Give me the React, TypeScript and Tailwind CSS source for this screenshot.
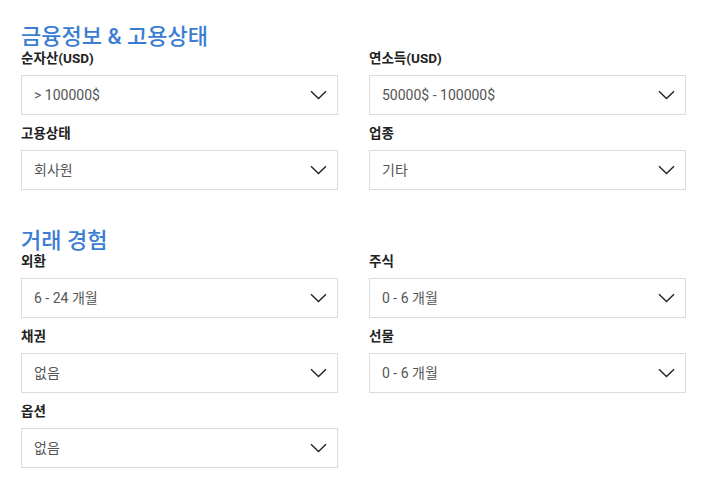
import React from "react";

const Chevron = () => (
  <svg width="17" height="10" viewBox="0 0 17 10" fill="none" className="shrink-0">
    <path d="M1 1.2 L8.5 8.5 L16 1.2" stroke="#222" strokeWidth="1.4" strokeLinejoin="miter" />
  </svg>
);

const Field = ({ label, value }: { label: string; value?: string }) => (
  <div className="flex flex-col">
    <div className="text-[13.5px] font-bold text-[#222] leading-[16px] h-[16px]">{label}</div>
    <div className="mt-[9px] h-[40px] border border-[#dcdcdc] bg-white flex items-center justify-between pl-[12px] pr-[10px]">
      <span className="text-[14px] text-[#555] leading-none">{value}</span>
      <Chevron />
    </div>
  </div>
);

export default function App() {
  return (
    <div
      className="w-[707px] h-[486px] bg-white pl-[21px] pr-[21px]"
      style={{ fontFamily: 'Roboto, "Noto Sans CJK KR", sans-serif' }}
    >
      <h2 className="pt-[22px] text-[22px] leading-[29px] text-[#3a7dd2] font-medium">금융정보 &amp; 고용상태</h2>
      <div className="grid grid-cols-2 gap-x-[31px] gap-y-[10px] mt-[-1px]">
        <Field label="순자산(USD)" value="> 100000$" />
        <Field label="연소득(USD)" value="50000$ - 100000$" />
        <Field label="고용상태" value="회사원" />
        <Field label="업종" value="기타" />
      </div>
      <h2 className="mt-[36px] text-[22px] leading-[29px] text-[#3a7dd2] font-medium">거래 경험</h2>
      <div className="grid grid-cols-2 gap-x-[31px] gap-y-[10px] mt-[-2px]">
        <Field label="외환" value="6 - 24 개월" />
        <Field label="주식" value="0 - 6 개월" />
        <Field label="채권" value="없음" />
        <Field label="선물" value="0 - 6 개월" />
        <Field label="옵션" value="없음" />
      </div>
    </div>
  );
}
